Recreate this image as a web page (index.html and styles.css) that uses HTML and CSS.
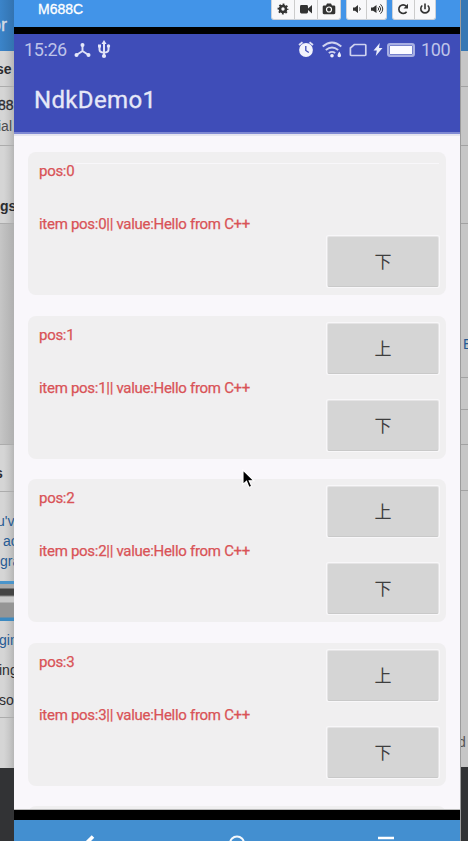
FILE: index.html
```html
<!DOCTYPE html>
<html lang="zh">
<head>
<meta charset="utf-8">
<title>NdkDemo1</title>
<link rel="stylesheet" href="styles.css">
</head>
<body>
<div class="desk">
  <aside class="back left">
    <div class="l-head">or</div>
    <div class="l-row r1"><b>se</b></div>
    <div class="l-row r2"><span class="dark">88</span><span>ial</span></div>
    <div class="l-row r3"><b>gs</b></div>
    <div class="l-row r4"></div>
    <div class="l-row r5"><b>s</b></div>
    <div class="l-row r6"><span>u'v</span><span class="in">ac</span><span>gra</span></div>
    <div class="thumb"></div>
    <div class="l-row r7"><span class="link">gin</span><span>ing</span><span>son</span></div>
    <div class="l-row r8"></div>
    <div class="l-foot"></div>
  </aside>

  <main class="phone">
    <header class="tools">
      <span class="model">M688C</span>
      <div class="group g1">
        <i><svg width="14" height="14" viewBox="0 0 14 14"><circle cx="7" cy="7" r="3" fill="none" stroke="#333" stroke-width="2.6"/><circle cx="7" cy="7" r="4.6" fill="none" stroke="#333" stroke-width="1.7" stroke-dasharray="1.8 1.813" stroke-dashoffset=".9"/></svg></i>
        <i><svg width="14" height="14" viewBox="0 0 14 14"><rect x="1" y="3" width="8" height="8.5" rx="1.4" fill="#333"/><path d="M9 6.5 13 3v8.500L9 8z" fill="#333"/></svg></i>
        <i><svg width="14" height="14" viewBox="0 0 14 14"><path d="M2 3.500h2L5 1.500h4l1 2h2a1.300 1.300 0 0 1 1.300 1.300v6A1.300 1.300 0 0 1 12 12.200H2A1.300 1.300 0 0 1 .7 10.800v-6A1.300 1.300 0 0 1 2 3.500z" fill="#333"/><circle cx="7" cy="7.500" r="2.500" fill="none" stroke="#fff" stroke-width="1.200"/></svg></i>
      </div>
      <div class="group g2">
        <i><svg width="14" height="14" viewBox="0 0 14 14"><path d="M3 5.500h2L8 3v8L5 8.700H3z" fill="#333"/><path d="M9.500 5.500q1.500 1.500 0 3" fill="none" stroke="#333"/></svg></i>
        <i><svg width="14" height="14" viewBox="0 0 14 14"><path d="M1 5.500h2L6.500 3v8L3 8.700H1z" fill="#333"/><path d="M8 5.500q1.500 1.500 0 3M9.300 4q3 3 0 6M10.500 2.300q4.500 4.700 0 9.400" fill="none" stroke="#333"/></svg></i>
      </div>
      <div class="group g3">
        <i><svg width="14" height="14" viewBox="0 0 14 14"><path d="M10.600 9.700A4.300 4.300 0 1 1 10.300 4.200" fill="none" stroke="#333" stroke-width="1.600"/><path d="M12 1.800v4.700H7.500z" fill="#333"/></svg></i>
        <i><svg width="14" height="14" viewBox="0 0 14 14"><path d="M4.300 3.500a4.200 4.200 0 1 0 5.400 0M7 1.500v5.700" fill="none" stroke="#333" stroke-width="1.600"/></svg></i>
      </div>
    </header>

    <section class="appbar">
      <div class="status">
        <span class="time">15:26</span>
        <svg class="tri" width="17" height="16" viewBox="0 0 17 16"><path d="M8.500 3v6L2.500 13M8.500 9l6 4" fill="none" stroke="#dfe1f5" stroke-width="1.900"/><g fill="#e6e8fa"><circle cx="8.500" cy="3" r="2"/><circle cx="2.500" cy="13" r="2"/><circle cx="14.500" cy="13" r="2"/></g></svg>
        <svg class="usb" width="14" height="19" viewBox="0 0 14 19"><path d="M7 3v13M2.500 6v3.500q0 3 4.500 3 4.500 0 4.500-3V6" fill="none" stroke="#e1e3f7" stroke-width="2"/><path d="M7 0 9.500 4h-5z" fill="#e6e8fa"/><g fill="#e6e8fa"><rect x="1" y="4.500" width="3" height="3"/><circle cx="11.500" cy="6" r="1.700"/><circle cx="7" cy="16" r="2.100"/></g></svg>
        <span class="grow"></span>
        <svg class="alarm" width="16" height="17" viewBox="0 0 16 17"><circle cx="8" cy="9" r="6.900" fill="#f2f3fc"/><path d="M1 4 4.500 1.300M15 4l-3.500-2.700" stroke="#dfe1f5" stroke-width="1.800"/><path d="M7.800 5v4.500l3 2" fill="none" stroke="#3f4db8" stroke-width="1.300"/></svg>
        <svg class="wifi" width="20" height="17" viewBox="0 0 20 17"><path d="M.7 5.500q9.300-8 18.600 0M3.800 9q6.200-5 12.400 0M6.800 12q3.200-2.300 6.400 0" fill="none" stroke="#cfd2ef" stroke-width="1.900"/><circle cx="10" cy="14.800" r="1.800" fill="#eceefb"/><path d="M17.300 10.500q3.600 5.500 0 5.800-3.600-.3 0-5.800z" fill="#eceefb"/></svg>
        <svg class="sim" width="18" height="14" viewBox="0 0 18 14"><path d="M5.300 1.500H16a.8.8 0 0 1 .8.800v9.400a.8.8 0 0 1-.8.800H2.200a.8.8 0 0 1-.8-.8V5z" fill="none" stroke="#cfd2ef" stroke-width="1.700"/></svg>
        <svg class="bolt" width="10" height="13" viewBox="0 0 10 13"><path d="M6.800 0 .5 7.500h3.300L2.800 13l6.700-8H6z" fill="#eceefb"/></svg>
        <span class="battery"></span>
        <span class="pct">100</span>
      </div>
      <h1>NdkDemo1</h1>
    </section>

    <section class="list">
      <article class="card only">
        <div class="text"><p>pos:0</p><p>item pos:0|| value:Hello from C++</p></div>
        <div class="btns"><button>下</button></div>
      </article>
      <article class="card">
        <div class="text"><p>pos:1</p><p>item pos:1|| value:Hello from C++</p></div>
        <div class="btns"><button>上</button><button>下</button></div>
      </article>
      <article class="card">
        <div class="text"><p>pos:2</p><p>item pos:2|| value:Hello from C++</p></div>
        <div class="btns"><button>上</button><button>下</button></div>
      </article>
      <article class="card">
        <div class="text"><p>pos:3</p><p>item pos:3|| value:Hello from C++</p></div>
        <div class="btns"><button>上</button><button>下</button></div>
      </article>
      <article class="card next"></article>
    </section>

    <nav class="nav">
      <svg width="20" height="20" viewBox="0 0 20 20"><path d="M14 1.500 6 9.500l8 8" fill="none" stroke="#fff" stroke-width="3.600"/></svg>
      <svg width="20" height="20" viewBox="0 0 20 20"><circle cx="10" cy="8.500" r="7" fill="none" stroke="#f4f8fc" stroke-width="2"/></svg>
      <svg width="20" height="20" viewBox="0 0 20 20"><path d="M2 3h16M2 9h16" stroke="#fff" stroke-width="2.400"/></svg>
    </nav>
  </main>

  <aside class="back right">
    <div class="h1"></div><div class="h2"></div><div class="h3"></div><div class="h4"></div>
    <div class="h5">E</div><div class="h6"></div><div class="h7"></div><div class="h8"></div>
    <div class="h9">d</div><div class="h10"></div>
  </aside>
</div>
<svg class="cursor" width="13" height="20" viewBox="0 0 13 20"><path d="M1 1v14.500l3.500-3.200L7 18.500l2.700-1.200-2.500-5.500H12z" fill="#000" stroke="#fff" stroke-width="1.100"/></svg>
</body>
</html>
```
FILE: styles.css
```css
* { box-sizing: border-box; }
body { margin: 0; overflow: hidden; background: #323335; font-family: "Liberation Sans", Arial, sans-serif; }
.desk { display: grid; grid-template-columns: 14px 446px 8px; height: 841px; }
i { font-style: normal; }

.back { height: 841px; overflow: hidden; white-space: nowrap; font-size: 14px; color: #4b4c4e; background: #c6c6c6; }
.back > div { overflow: hidden; }
.left { background: linear-gradient(90deg, #d5d5d5 0 4px, #c9c9c9 9px, #b6b6b6 14px); }
.l-head { height: 51px; padding-top: 14px; text-indent: -9px; font-size: 18px; line-height: 22px; color: #d5dce4; -webkit-text-stroke: .4px; background: linear-gradient(90deg, #3b84c9, #3373b0); }
.l-row { border-bottom: 1px solid #acacac; }
.l-row span, .l-row b { display: block; line-height: 20px; }
.l-row b { color: #2b2c30; }
.r1 { height: 36px; padding-top: 8px; text-indent: -4px; }
.r2 { height: 59px; padding-top: 8px; text-indent: -2px; }
.r2 .dark { color: #2b2c30; margin-bottom: 1px; -webkit-text-stroke: .3px; }
.r3 { height: 78px; padding-top: 50px; }
.r4 { height: 221px; background: linear-gradient(90deg, #c6c6c6, #b0b0b0); }
.r5 { height: 47px; padding-top: 18px; text-indent: -5px; }
.r6 { height: 89px; padding-top: 19px; color: #265b94; border: 0; }
.r6 span:first-child { text-indent: -3px; }
.r6 .in { text-indent: 3px; }
.thumb { height: 40px; background: linear-gradient(#4a94ca 0 3px, #a8a8a8 3px 7px, #444 8px 14px, #c9c9c9 16px 21px, #959595 22px 36px, #3c89c0 37px); }
.r7 { height: 97px; padding-top: 9px; }
.r7 span { margin-bottom: 10px; color: #2b2c30; text-indent: -1px; }
.r7 .link { color: #265b94; }
.r8 { height: 50px; border: 0; }
.l-foot { height: 74px; background: #323335; }

.right { border-left: 1px solid #9c9c9c; color: #265b94; }
.right > div { border-bottom: 1px solid #a2a2a2; }
.right .h1 { height: 51px; background: #3677b4; border: 0; }
.h2 { height: 36px; } .h3 { height: 59px; } .h4 { height: 78px; }
.h5 { height: 154px; padding: 112px 0 0 2px; }
.h6 { height: 32px; } .h7 { height: 35px; } .h8 { height: 46px; }
.right .h9 { height: 276px; padding-top: 243px; color: #555; text-indent: -3px; border: 0; }
.right .h10 { height: 74px; background: #323335; border: 0; }

.phone { display: flex; flex-direction: column; height: 841px; overflow: hidden; background: #f9f7fb; }
.tools { display: flex; height: 34px; padding-left: 24px; background: #4294e8; border-bottom: 7px solid #000; }
.model { width: 233px; color: #fff; font-size: 14px; line-height: 18px; -webkit-text-stroke: .3px; }
.group { display: flex; height: 20px; background: #f8f8fa; border: 1px solid #ccd2da; border-top: 0; border-radius: 0 0 3px 3px; }
.group i { display: flex; justify-content: center; align-items: center; flex: 1; padding-bottom: 2px; }
.group i + i { border-left: 1px solid #ccc; }
.g1 { width: 70px; margin-right: 5px; }
.g2 { width: 41px; margin-right: 5px; }
.g3 { width: 44px; }

.appbar { height: 100px; background: #3f4db8; border-bottom: 2px solid #7f89d3; font-family: Roboto, sans-serif; flex: none; }
.status { display: flex; align-items: center; height: 31px; padding: 0 10px; color: #bec3e9; font-size: 18px; }
.time { width: 44px; letter-spacing: -.4px; }
.tri { margin-left: 6px; }
.usb { margin-left: 6px; }
.grow { flex: 1; }
.wifi { margin-left: 8px; }
.sim { margin-left: 7px; }
.bolt { margin-left: 6px; }
.battery { width: 28px; height: 14px; margin-left: 4px; border: 2px solid #a8afe2; border-radius: 3px; background: #fbfbff; box-shadow: inset 0 0 0 1px #7480cc; }
.pct { width: 29px; margin-left: 6px; letter-spacing: -.4px; }
h1 { margin: 19px 0 0 20px; font-size: 24px; line-height: 32px; font-weight: 400; color: #e6e8f7; letter-spacing: .35px; -webkit-text-stroke: .3px; }

.list { height: 676px; flex: none; overflow: hidden; padding: 16px 14px 0; border-top: 2px solid #e5e5ef; border-bottom: 1px solid #bbb; }
.card { display: flex; justify-content: space-between; height: 143px; margin-bottom: 20.600px; padding: 8px 8px 9px 11px; border-radius: 8px; background: #f0eff0; }
.only { background: linear-gradient(#f8f7fa, #f8f7fa) 47px 11px / 364px 1px no-repeat #f0eff0; }
.text { padding-top: 2px; font-family: Roboto, sans-serif; font-size: 15px; line-height: 18px; color: #d95357; white-space: nowrap; letter-spacing: -.29px; -webkit-text-stroke: .25px; }
.text p { margin: 0 0 35px; }
.btns { display: flex; flex-direction: column; justify-content: space-between; width: 110px; }
.only .btns { justify-content: flex-end; }
button { display: block; width: 110px; height: 49px; padding: 0 0 2px; border: 0; border-radius: 1px; background: #d5d5d5; color: #3e3e3e; font: 17px "Noto Sans CJK SC", sans-serif; box-shadow: 0 1px 0 #c9c9c9, 0 0 0 1px #e5e4e5, 0 0 0 2px #f8f7f9; }
.next { margin: 0; }

.nav { display: grid; grid-template-columns: 150px 145px 153px; justify-items: center; height: 31px; flex: none; padding-top: 15px; border-top: 10px solid #000; background: #438fd0; }
.cursor { position: absolute; left: 242px; top: 469px; }
```
